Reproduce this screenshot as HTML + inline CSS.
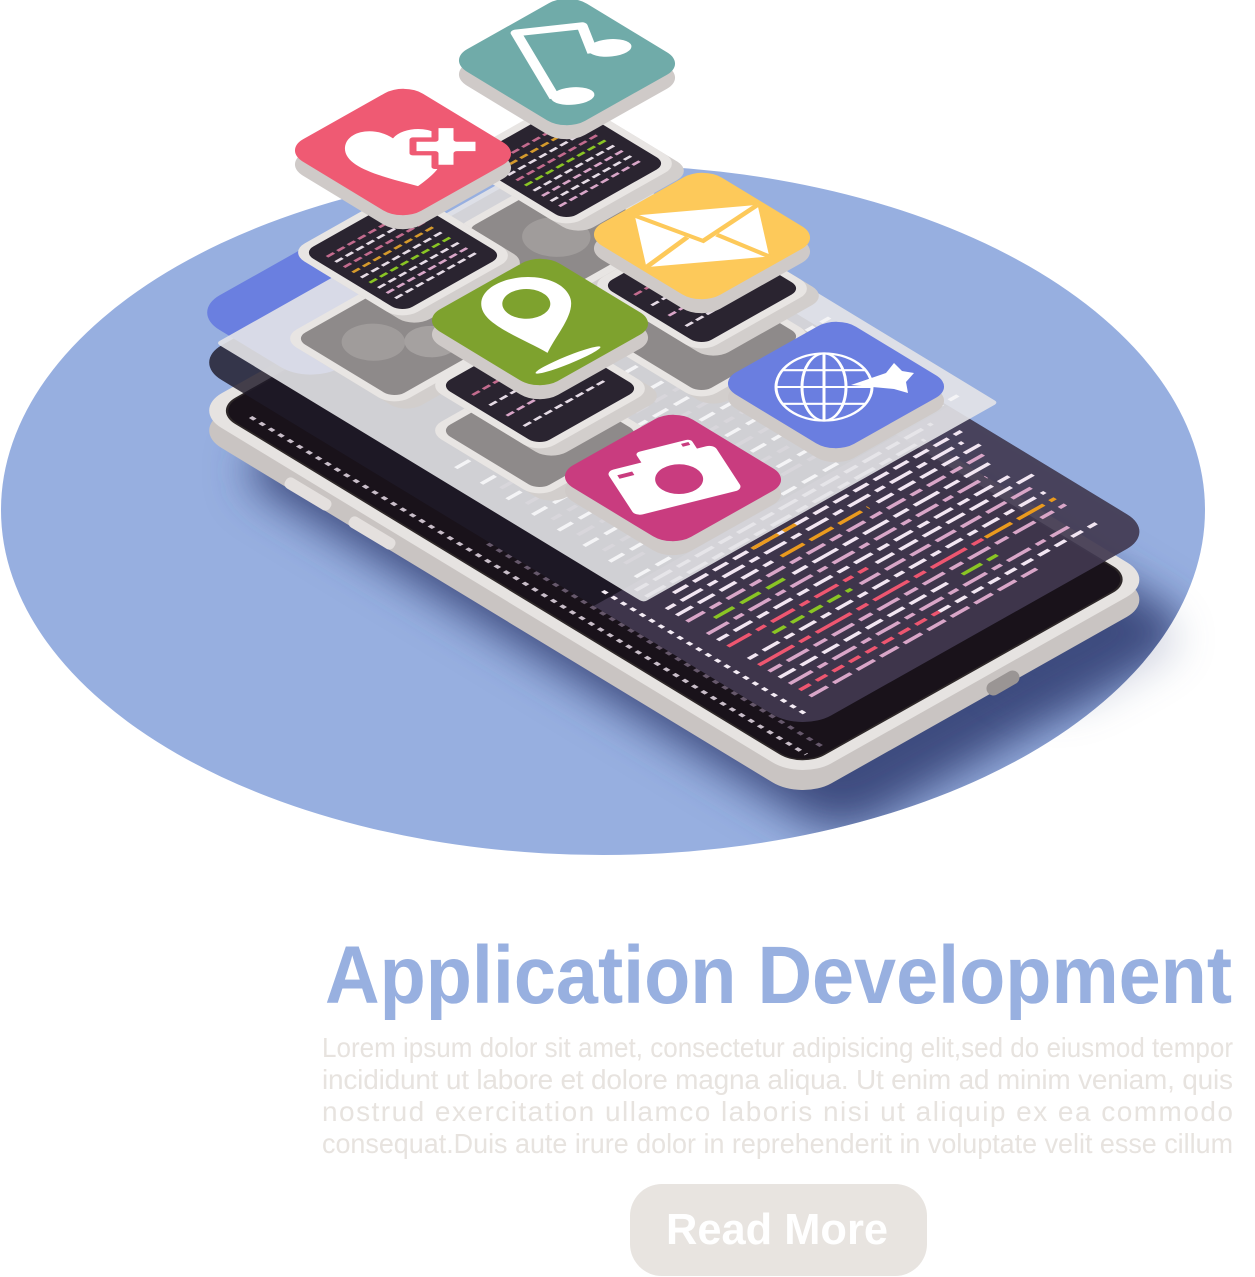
<!DOCTYPE html>
<html><head><meta charset="utf-8"><style>
html,body{margin:0;padding:0;background:#fff;}
svg{display:block}
</style></head><body>
<svg width="1255" height="1277" viewBox="0 0 1255 1277" xmlns="http://www.w3.org/2000/svg">
<defs>
<filter id="blur" x="-30%" y="-30%" width="160%" height="160%"><feGaussianBlur stdDeviation="22"/></filter>
<clipPath id="ell"><ellipse cx="603" cy="510" rx="602" ry="345"/></clipPath>
</defs>

<ellipse cx="603" cy="510" rx="602" ry="345" fill="#97afe0"/>

<g clip-path="url(#ell)">
  <g filter="url(#blur)">
    <rect x="0" y="0" width="420" height="713" rx="40" fill="#3d4b7f" transform="matrix(0.872,-0.491,0.855,0.519,230,470)"/>
  </g>
</g>
<g opacity="0.25" filter="url(#blur)">
  <rect x="250" y="600" width="160" height="113" rx="40" fill="#3d4b7f" transform="matrix(0.872,-0.491,0.855,0.519,230,470)"/>
</g>

<g transform="matrix(0.872,-0.491,0.855,0.519,192,430)">
  <rect x="0" y="0" width="407" height="713" rx="34" fill="#c9c4c2"/>
</g>
<g transform="matrix(0.872,-0.491,0.855,0.519,192,410)">
  <rect x="0" y="0" width="407" height="713" rx="34" fill="#e6e3e1"/>
  <rect x="12" y="12" width="383" height="689" rx="26" fill="#2d2728"/>
  <rect x="14" y="14" width="379" height="685" rx="24" fill="#19121a"/>
  <line x1="28" y1="40" x2="28" y2="690" stroke="#e8dde8" stroke-width="4" stroke-dasharray="5 6" opacity="0.85"/>
  <line x1="45" y1="300" x2="45" y2="690" stroke="#7a6a80" stroke-width="4" stroke-dasharray="5 6" opacity="0.8"/>
</g>
<rect x="985" y="676" width="36" height="14" rx="7" fill="#9a9594" transform="rotate(-30 1003 683)"/>
<rect x="282" y="488" width="52" height="12" rx="5" fill="#e4e0de" transform="rotate(31 308 494)"/>
<rect x="346" y="527" width="52" height="12" rx="5" fill="#e4e0de" transform="rotate(31 372 533)"/>

<g transform="matrix(0.872,-0.491,0.855,0.519,192,362)">
  <rect x="0" y="0" width="407" height="713" rx="34" fill="#1e1a28" opacity="0.82"/>
  <path d="M0 470 H407 V679 a34 34 0 0 1 -34 34 H34 a34 34 0 0 1 -34 -34 Z" fill="#5a4e6c" opacity="0.55"/>
  <g stroke-width="4" fill="none">
    <line x1="40" y1="478" x2="380" y2="478" stroke="#f2e6f2" stroke-dasharray="14 7 20 7"/>
    <line x1="40" y1="490" x2="360" y2="490" stroke="#f2e6f2" stroke-dasharray="22 7 12 7"/>
    <line x1="60" y1="502" x2="390" y2="502" stroke="#f2e6f2" stroke-dasharray="16 7"/>
    <line x1="150" y1="502" x2="200" y2="502" stroke="#ea9a1e" stroke-dasharray="30 6"/>
    <line x1="40" y1="514" x2="380" y2="514" stroke="#f2e6f2" stroke-dasharray="10 7 24 7"/>
    <line x1="160" y1="526" x2="260" y2="526" stroke="#ea9a1e" stroke-dasharray="26 7"/>
    <line x1="40" y1="526" x2="150" y2="526" stroke="#f2e6f2" stroke-dasharray="18 7"/>
    <line x1="270" y1="526" x2="390" y2="526" stroke="#f2e6f2" stroke-dasharray="18 7"/>
    <line x1="40" y1="538" x2="380" y2="538" stroke="#d9a6c8" stroke-dasharray="20 7 12 7"/>
    <line x1="60" y1="550" x2="140" y2="550" stroke="#8ac524" stroke-dasharray="22 8"/>
    <line x1="150" y1="550" x2="380" y2="550" stroke="#f2e6f2" stroke-dasharray="16 7 28 7"/>
    <line x1="40" y1="562" x2="360" y2="562" stroke="#d9a6c8" stroke-dasharray="24 7 10 7"/>
    <line x1="40" y1="574" x2="380" y2="574" stroke="#f2e6f2" stroke-dasharray="12 7 20 7"/>
    <line x1="40" y1="586" x2="200" y2="586" stroke="#ee5670" stroke-dasharray="26 7 10 7"/>
    <line x1="210" y1="586" x2="390" y2="586" stroke="#f2e6f2" stroke-dasharray="20 7"/>
    <line x1="80" y1="598" x2="170" y2="598" stroke="#8ac524" stroke-dasharray="14 7"/>
    <line x1="180" y1="598" x2="380" y2="598" stroke="#d9a6c8" stroke-dasharray="22 7"/>
    <line x1="40" y1="610" x2="380" y2="610" stroke="#f2e6f2" stroke-dasharray="10 7 18 7"/>
    <line x1="40" y1="622" x2="300" y2="622" stroke="#ee5670" stroke-dasharray="40 7 12 7"/>
    <line x1="300" y1="622" x2="380" y2="622" stroke="#ea9a1e" stroke-dasharray="30 7"/>
    <line x1="40" y1="634" x2="380" y2="634" stroke="#d9a6c8" stroke-dasharray="14 7 24 7"/>
    <line x1="40" y1="646" x2="240" y2="646" stroke="#f2e6f2" stroke-dasharray="18 7"/>
    <line x1="250" y1="646" x2="290" y2="646" stroke="#8ac524" stroke-dasharray="22 7"/>
    <line x1="40" y1="658" x2="360" y2="658" stroke="#d9a6c8" stroke-dasharray="26 7 10 7"/>
    <line x1="40" y1="670" x2="200" y2="670" stroke="#ee5670" stroke-dasharray="12 7"/>
    <line x1="200" y1="670" x2="380" y2="670" stroke="#f2e6f2" stroke-dasharray="12 7"/>
    <line x1="40" y1="682" x2="300" y2="682" stroke="#d9a6c8" stroke-dasharray="20 7"/>
    <line x1="20" y1="460" x2="20" y2="700" stroke="#f4ecf4" stroke-dasharray="5 6"/>
    <g stroke="#6c5a70" opacity="0.9">
      <line x1="60" y1="300" x2="300" y2="300" stroke-dasharray="14 8"/>
      <line x1="60" y1="330" x2="330" y2="330" stroke-dasharray="20 8"/>
      <line x1="60" y1="360" x2="300" y2="360" stroke-dasharray="10 8"/>
      <line x1="60" y1="390" x2="360" y2="390" stroke-dasharray="18 8"/>
      <line x1="60" y1="420" x2="340" y2="420" stroke-dasharray="12 8"/>
      <line x1="60" y1="445" x2="380" y2="445" stroke-dasharray="22 8"/>
    </g>
  </g>
</g>

<!-- blue layer (only left corner visible) -->
<g transform="matrix(0.872,-0.491,0.855,0.519,190,312)">
  <rect x="0" y="0" width="190" height="140" rx="34" fill="#6a7fe0"/>
</g>

<g transform="matrix(0.872,-0.491,0.855,0.519,216,343)">
  <rect x="0" y="0" width="407" height="500" rx="4" fill="#e4e4e8" opacity="0.9"/>
  <g stroke="#f4f4f6" stroke-width="4" stroke-dasharray="16 8">
    <line x1="20" y1="260" x2="390" y2="260"/><line x1="20" y1="290" x2="390" y2="290"/>
    <line x1="20" y1="320" x2="390" y2="320"/><line x1="20" y1="350" x2="390" y2="350"/>
    <line x1="20" y1="380" x2="390" y2="380"/><line x1="20" y1="410" x2="390" y2="410"/>
    <line x1="20" y1="440" x2="390" y2="440"/><line x1="20" y1="470" x2="390" y2="470"/>
  </g>
</g>

<!-- gear plates -->
<g transform="translate(395,340) matrix(0.872,-0.491,0.855,0.519,0,0)">
  <rect x="-66" y="-66" width="132" height="132" rx="18" fill="#d2cecc" transform="translate(0,14)"/>
  <rect x="-66" y="-66" width="132" height="132" rx="18" fill="#e8e5e3"/>
  <rect x="-58" y="-58" width="116" height="116" rx="12" fill="#8e8a8a"/>
  <circle cx="-15" cy="-10" r="26" fill="#a09c9b"/><circle cx="20" cy="22" r="22" fill="#a5a1a0"/>
</g>
<g transform="translate(565,232) matrix(0.872,-0.491,0.855,0.519,0,0)">
  <rect x="-66" y="-66" width="132" height="132" rx="18" fill="#d2cecc" transform="translate(0,14)"/>
  <rect x="-66" y="-66" width="132" height="132" rx="18" fill="#e8e5e3"/>
  <rect x="-58" y="-58" width="116" height="116" rx="12" fill="#8e8a8a"/>
  <circle cx="-10" cy="0" r="28" fill="#a09c9b"/>
</g>
<g transform="translate(702,335) matrix(0.872,-0.491,0.855,0.519,0,0)">
  <rect x="-66" y="-66" width="132" height="132" rx="18" fill="#d2cecc" transform="translate(0,14)"/>
  <rect x="-66" y="-66" width="132" height="132" rx="18" fill="#e8e5e3"/>
  <rect x="-58" y="-58" width="116" height="116" rx="12" fill="#8e8a8a"/>
</g>
<g transform="translate(540,432) matrix(0.872,-0.491,0.855,0.519,0,0)">
  <rect x="-66" y="-66" width="132" height="132" rx="18" fill="#d2cecc" transform="translate(0,14)"/>
  <rect x="-66" y="-66" width="132" height="132" rx="18" fill="#e8e5e3"/>
  <rect x="-58" y="-58" width="116" height="116" rx="12" fill="#8e8a8a"/>
</g>

<!-- code plates -->
<g transform="translate(403,254) matrix(0.872,-0.491,0.855,0.519,0,0)">
  <rect x="-66" y="-66" width="132" height="132" rx="18" fill="#d2cecc" transform="translate(0,14)"/>
  <rect x="-66" y="-66" width="132" height="132" rx="18" fill="#e8e5e3"/>
  <rect x="-58" y="-58" width="116" height="116" rx="12" fill="#2a2430"/>
  <g stroke-width="3" stroke-dasharray="8 4">
    <line x1="-48" y1="-40" x2="48" y2="-40" stroke="#c36b8e"/><line x1="-48" y1="-30" x2="48" y2="-30" stroke="#e6dce6"/>
    <line x1="-48" y1="-20" x2="48" y2="-20" stroke="#c36b8e"/><line x1="-48" y1="-10" x2="48" y2="-10" stroke="#d59a2c"/>
    <line x1="-48" y1="0" x2="48" y2="0" stroke="#e6dce6"/><line x1="-48" y1="10" x2="48" y2="10" stroke="#8ac524"/>
    <line x1="-48" y1="20" x2="48" y2="20" stroke="#e6dce6"/><line x1="-48" y1="30" x2="48" y2="30" stroke="#d9a6c8"/>
    <line x1="-48" y1="40" x2="48" y2="40" stroke="#e6dce6"/>
  </g>
</g>
<g transform="translate(567,162) matrix(0.872,-0.491,0.855,0.519,0,0)">
  <rect x="-66" y="-66" width="132" height="132" rx="18" fill="#d2cecc" transform="translate(0,14)"/>
  <rect x="-66" y="-66" width="132" height="132" rx="18" fill="#e8e5e3"/>
  <rect x="-58" y="-58" width="116" height="116" rx="12" fill="#2a2430"/>
  <g stroke-width="3" stroke-dasharray="8 4">
    <line x1="-48" y1="-40" x2="48" y2="-40" stroke="#c36b8e"/><line x1="-48" y1="-30" x2="48" y2="-30" stroke="#d59a2c"/>
    <line x1="-48" y1="-20" x2="48" y2="-20" stroke="#e6dce6"/><line x1="-48" y1="-10" x2="48" y2="-10" stroke="#c36b8e"/>
    <line x1="-48" y1="0" x2="48" y2="0" stroke="#8ac524"/><line x1="-48" y1="10" x2="48" y2="10" stroke="#e6dce6"/>
    <line x1="-48" y1="20" x2="48" y2="20" stroke="#d9a6c8"/><line x1="-48" y1="30" x2="48" y2="30" stroke="#e6dce6"/>
    <line x1="-48" y1="40" x2="48" y2="40" stroke="#d9a6c8"/>
  </g>
</g>
<g transform="translate(702,287) matrix(0.872,-0.491,0.855,0.519,0,0)">
  <rect x="-66" y="-66" width="132" height="132" rx="18" fill="#d2cecc" transform="translate(0,14)"/>
  <rect x="-66" y="-66" width="132" height="132" rx="18" fill="#e8e5e3"/>
  <rect x="-58" y="-58" width="116" height="116" rx="12" fill="#2a2430"/>
  <g stroke-width="3" stroke-dasharray="8 4">
    <line x1="-48" y1="-30" x2="48" y2="-30" stroke="#c36b8e"/><line x1="-48" y1="-10" x2="48" y2="-10" stroke="#e6dce6"/>
    <line x1="-48" y1="10" x2="48" y2="10" stroke="#d9a6c8"/><line x1="-48" y1="30" x2="48" y2="30" stroke="#e6dce6"/>
  </g>
</g>
<g transform="translate(540,387) matrix(0.872,-0.491,0.855,0.519,0,0)">
  <rect x="-66" y="-66" width="132" height="132" rx="18" fill="#d2cecc" transform="translate(0,14)"/>
  <rect x="-66" y="-66" width="132" height="132" rx="18" fill="#e8e5e3"/>
  <rect x="-58" y="-58" width="116" height="116" rx="12" fill="#2a2430"/>
  <g stroke-width="3" stroke-dasharray="8 4">
    <line x1="-48" y1="-30" x2="48" y2="-30" stroke="#c36b8e"/><line x1="-48" y1="-10" x2="48" y2="-10" stroke="#e6dce6"/>
    <line x1="-48" y1="10" x2="48" y2="10" stroke="#d9a6c8"/><line x1="-48" y1="30" x2="48" y2="30" stroke="#e6dce6"/>
  </g>
</g>

<!-- TILES -->
<g transform="translate(567,62)">
  <rect x="-69" y="-69" width="138" height="138" rx="22" fill="#cfcac8" transform="translate(0,14) matrix(0.872,-0.491,0.855,0.519,0,0)"/>
  <rect x="-69" y="-69" width="138" height="138" rx="22" fill="#70aba9" transform="matrix(0.872,-0.491,0.855,0.519,0,0)"/>
  <g transform="scale(1,0.62) rotate(-10)" fill="none" stroke="#fff" stroke-width="11" stroke-linejoin="round">
    <path d="M-22 55 L-42 -55 L25 -55 L28 -10"/>
    <ellipse cx="-4" cy="55" rx="22" ry="14" fill="#fff" stroke="none"/>
    <ellipse cx="46" cy="-15" rx="22" ry="14" fill="#fff" stroke="none"/>
  </g>
</g>
<g transform="translate(403,152)">
  <rect x="-69" y="-69" width="138" height="138" rx="22" fill="#cfcac8" transform="translate(0,14) matrix(0.872,-0.491,0.855,0.519,0,0)"/>
  <rect x="-69" y="-69" width="138" height="138" rx="22" fill="#ef5a73" transform="matrix(0.872,-0.491,0.855,0.519,0,0)"/>
  <g transform="scale(1,0.62)">
    <path d="M15 55 C-20 40 -60 25 -58 -8 C-56 -35 -28 -42 -10 -22 C2 -45 40 -42 42 -10 C44 20 28 40 15 55 Z" fill="#fff"/>
    <path d="M10 -20 h22 v-22 h22 v22 h22 v22 h-22 v22 h-22 v-22 h-22 Z" fill="#fff" stroke="#ef5a73" stroke-width="7" stroke-linejoin="round"/>
  </g>
</g>
<g transform="translate(702,236)">
  <rect x="-69" y="-69" width="138" height="138" rx="22" fill="#cfcac8" transform="translate(0,14) matrix(0.872,-0.491,0.855,0.519,0,0)"/>
  <rect x="-69" y="-69" width="138" height="138" rx="22" fill="#fdc95a" transform="matrix(0.872,-0.491,0.855,0.519,0,0)"/>
  <g transform="scale(1,0.62) rotate(-8)">
    <rect x="-62" y="-42" width="124" height="84" fill="#fff"/>
    <path d="M-62 -42 L0 8 L62 -42" fill="none" stroke="#fdc95a" stroke-width="6"/>
    <path d="M-62 42 L-15 0 M62 42 L15 0" fill="none" stroke="#fdc95a" stroke-width="6"/>
  </g>
</g>
<g transform="translate(540,322)">
  <rect x="-69" y="-69" width="138" height="138" rx="22" fill="#cfcac8" transform="translate(0,14) matrix(0.872,-0.491,0.855,0.519,0,0)"/>
  <rect x="-69" y="-69" width="138" height="138" rx="22" fill="#7ea22e" transform="matrix(0.872,-0.491,0.855,0.519,0,0)"/>
  <g transform="translate(-8,-5) scale(1,0.62) rotate(-15)">
    <path d="M0 60 C-15 35 -45 5 -45 -22 C-45 -50 -22 -65 0 -65 C22 -65 45 -50 45 -22 C45 5 15 35 0 60 Z" fill="#fff"/>
    <circle cx="0" cy="-22" r="24" fill="#7ea22e"/>
  </g>
  <ellipse cx="28" cy="38" rx="35" ry="4" fill="#fff" transform="rotate(-22 28 38)"/>
</g>
<g transform="translate(836,385)">
  <rect x="-69" y="-69" width="138" height="138" rx="22" fill="#cfcac8" transform="translate(0,14) matrix(0.872,-0.491,0.855,0.519,0,0)"/>
  <rect x="-69" y="-69" width="138" height="138" rx="22" fill="#6a7ee0" transform="matrix(0.872,-0.491,0.855,0.519,0,0)"/>
  <g transform="translate(-12,2) scale(1,0.7)" fill="none" stroke="#fff" stroke-width="3">
    <circle cx="0" cy="0" r="48"/>
    <ellipse cx="0" cy="0" rx="22" ry="48"/>
    <line x1="0" y1="-48" x2="0" y2="48"/>
    <line x1="-48" y1="0" x2="48" y2="0"/>
    <line x1="-42" y1="-24" x2="42" y2="-24"/><line x1="-42" y1="24" x2="42" y2="24"/>
  </g>
  <path d="M15 0 L50 -12 L58 -22 L66 -14 L78 -12 L70 -3 L72 8 L58 4 Z" fill="#fff"/>
</g>
<g transform="translate(673,478)">
  <rect x="-69" y="-69" width="138" height="138" rx="22" fill="#cfcac8" transform="translate(0,14) matrix(0.872,-0.491,0.855,0.519,0,0)"/>
  <rect x="-69" y="-69" width="138" height="138" rx="22" fill="#c93c7f" transform="matrix(0.872,-0.491,0.855,0.519,0,0)"/>
  <g transform="scale(1,0.62) rotate(-22)">
    <rect x="-58" y="-35" width="116" height="78" rx="8" fill="#fff"/>
    <rect x="-20" y="-52" width="60" height="22" rx="5" fill="#fff"/>
    <circle cx="5" cy="4" r="24" fill="#c93c7f"/>
    <rect x="-50" y="-25" width="16" height="6" fill="#c93c7f"/>
    <rect x="28" y="-48" width="8" height="5" fill="#c93c7f"/>
  </g>
</g>

<text x="325" y="1003" textLength="907" lengthAdjust="spacingAndGlyphs" font-family="'Liberation Sans Narrow','Liberation Sans',sans-serif" font-weight="bold" font-size="82" fill="#98b0e0">Application Development</text>
<g font-family="'Liberation Sans Narrow','Liberation Sans',sans-serif" font-size="28" fill="#e7e3df">
<text x="322" y="1057" textLength="911" lengthAdjust="spacingAndGlyphs">Lorem ipsum dolor sit amet, consectetur adipisicing  elit,sed do eiusmod tempor</text>
<text x="322" y="1089" textLength="911" lengthAdjust="spacing">incididunt ut labore et dolore magna aliqua. Ut enim ad minim veniam, quis</text>
<text x="322" y="1121" textLength="911" lengthAdjust="spacing">nostrud exercitation ullamco laboris nisi ut aliquip ex ea commodo</text>
<text x="322" y="1153" textLength="911" lengthAdjust="spacingAndGlyphs">consequat.Duis aute irure dolor in reprehenderit in voluptate velit esse cillum</text>
</g>
<rect x="630" y="1184" width="297" height="92" rx="32" fill="#e8e4e0"/>
<text x="666" y="1244" textLength="222" lengthAdjust="spacingAndGlyphs" font-family="'Liberation Sans Narrow','Liberation Sans',sans-serif" font-weight="bold" font-size="44" fill="#ffffff">Read More</text>
</svg>
</body></html>
